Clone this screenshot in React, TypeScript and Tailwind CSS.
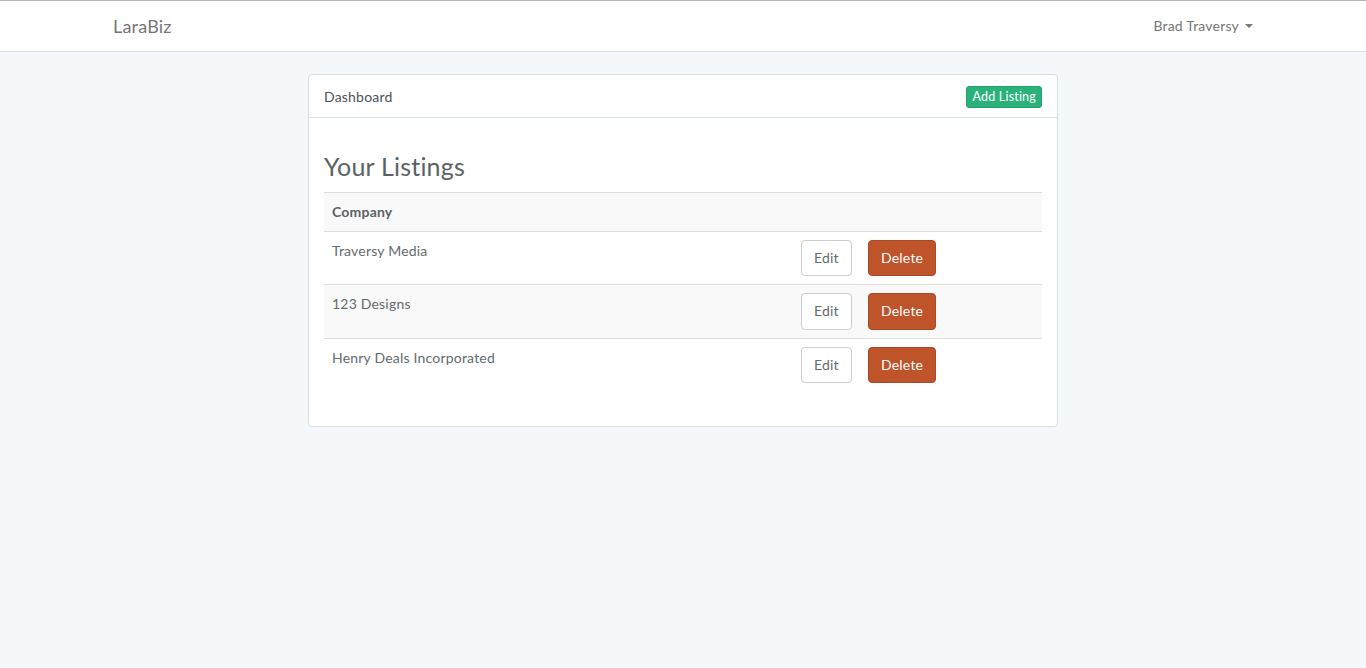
import React from 'react';

const listings = [
    { id: 1, company: 'Traversy Media' },
    { id: 2, company: '123 Designs' },
    { id: 3, company: 'Henry Deals Incorporated' },
];

const App: React.FC = () => {
    return (
        <div
            className="min-h-screen bg-[#f5f8fa] text-[14px] leading-[1.6] text-[#636b6f] tracking-[0.2px]"
            style={{ fontFamily: 'Lato, "Open Sans", sans-serif' }}
        >
            {/* Navbar */}
            <nav className="bg-white border-t border-t-[#b5b5b5] border-b border-b-[#d3e0e9] h-[52px]">
                <div className="w-[1170px] mx-auto px-[15px] h-full flex items-center justify-between">
                    <a className="text-[18px] text-[#777] leading-[20px]">LaraBiz</a>
                    <a className="flex items-center gap-[6px] text-[#777]">
                        Brad Traversy
                        <span className="w-0 h-0 border-l-[4px] border-r-[4px] border-t-[4px] border-l-transparent border-r-transparent border-t-[#777]" />
                    </a>
                </div>
            </nav>

            <div className="w-[1170px] mx-auto px-[15px] pt-[22px]">
                <div className="w-[750px] mx-auto bg-white border border-[#d3e0e9] rounded-[4px]">
                    <div className="flex items-center justify-between px-[15px] pt-[11px] pb-[9px] h-[43px] border-b border-[#d3e0e9] text-[#4b5256]">
                        <span>Dashboard</span>
                        <a className="bg-[#2ab27b] border border-[#259d6d] text-white text-[12.5px] leading-[1.5] px-[5px] py-[1px] rounded-[3px]">
                            Add Listing
                        </a>
                    </div>
                    <div className="p-[15px]">
                        <h3 className="text-[25px] leading-[1.1] text-[#5b6266] mt-[20px] mb-[11px]">Your Listings</h3>
                        <table className="w-full mb-[20px] border-collapse">
                            <tbody>
                                <tr className="bg-[#f9f9f9]">
                                    <th className="text-left font-bold p-[8px] border-t border-[#ddd] text-[#5b6266]">Company</th>
                                    <th className="border-t border-[#ddd] w-[67px]"></th>
                                    <th className="border-t border-[#ddd] w-[182px]"></th>
                                </tr>
                                {listings.map((l, i) => (
                                    <tr key={l.id} className={i % 2 === 1 ? 'bg-[#f9f9f9]' : ''}>
                                        <td className="p-[8px] align-top border-t border-[#ddd]">{l.company}</td>
                                        <td className="p-[8px] align-top border-t border-[#ddd]">
                                            <a className="inline-block bg-white border border-[#ccc] rounded-[4px] px-[12px] py-[6px] text-[#636b6f]">
                                                Edit
                                            </a>
                                        </td>
                                        <td className="p-[8px] align-top border-t border-[#ddd]">
                                            <button className="bg-[#bf5329] border border-[#aa4a24] rounded-[4px] px-[12px] py-[6px] text-white leading-[1.6]">
                                                Delete
                                            </button>
                                        </td>
                                    </tr>
                                ))}
                            </tbody>
                        </table>
                    </div>
                </div>
            </div>
        </div>
    );
};

export default App;
